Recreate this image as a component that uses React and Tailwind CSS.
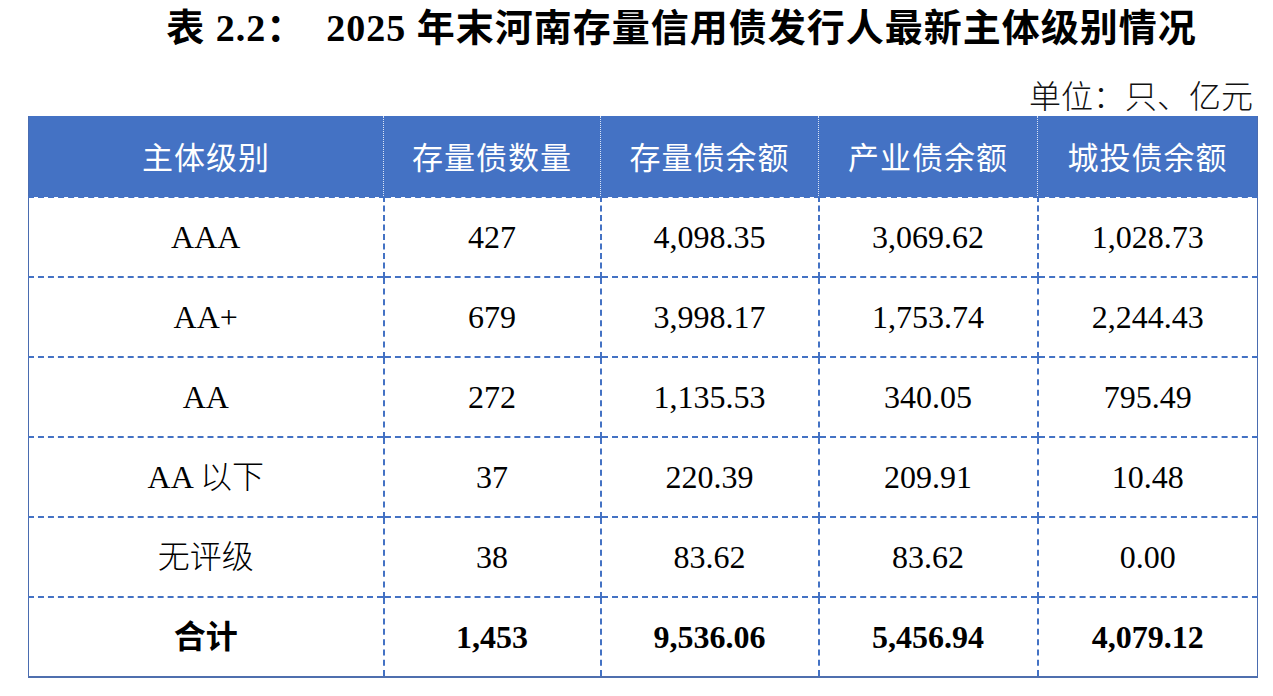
const font = "font-['Liberation_Serif','Noto_Sans_CJK_SC',serif]";

const rows = [
  ["AAA", "427", "4,098.35", "3,069.62", "1,028.73"],
  ["AA+", "679", "3,998.17", "1,753.74", "2,244.43"],
  ["AA", "272", "1,135.53", "340.05", "795.49"],
  ["AA 以下", "37", "220.39", "209.91", "10.48"],
  ["无评级", "38", "83.62", "83.62", "0.00"],
];

const total = ["合计", "1,453", "9,536.06", "5,456.94", "4,079.12"];

const headers = ["主体级别", "存量债数量", "存量债余额", "产业债余额", "城投债余额"];

const widths = ["w-[355px]", "w-[217px]", "w-[218px]", "w-[219px]", "w-[220px]"];

export default function App() {
  return (
    <div className={`w-[1273px] h-[696px] bg-white text-black ${font}`}>
      <h1 className="pt-[5px] pl-[90px] text-center text-[38px] leading-[46px] font-bold tracking-[1px] whitespace-pre">
        表 2.2：  2025 年末河南存量信用债发行人最新主体级别情况
      </h1>
      <div className="mt-[22px] mb-[1px] pr-[20px] text-right text-[32px] leading-[42px] font-['Noto_Sans_CJK_SC',sans-serif] font-light text-[#111]">
        单位：只、亿元
      </div>
      <table className="ml-[28px] w-[1229px] border-collapse table-fixed border-x border-b-2 border-solid border-x-[#4a6cb0] border-b-[#4f6fae]">
        <colgroup>
          {widths.map((w, i) => (
            <col key={i} className={w} />
          ))}
        </colgroup>
        <thead>
          <tr className="h-[81px] bg-[#4472c4]">
            {headers.map((h, i) => (
              <th
                key={h}
                className={`p-0 text-center align-middle text-white text-[31px] font-normal tracking-[1px] font-['Noto_Sans_CJK_SC',sans-serif] ${
                  i < 4 ? "border-r border-dotted border-r-[#dbe4f5]" : ""
                }`}
              >
                {h}
              </th>
            ))}
          </tr>
        </thead>
        <tbody>
          {rows.map((r, ri) => (
            <tr key={ri} className="h-[80px]">
              {r.map((c, ci) => (
                <td
                  key={ci}
                  className={`p-0 text-center align-middle text-[32px] font-light border-t-2 border-dashed border-t-[#4472c4] ${
                    ci < 4 ? "border-r-2 border-r-[#4472c4]" : ""
                  }`}
                >
                  {c}
                </td>
              ))}
            </tr>
          ))}
          <tr className="h-[80px]">
            {total.map((c, ci) => (
              <td
                key={ci}
                className={`p-0 text-center align-middle text-[32px] font-bold border-t-2 border-dashed border-t-[#4472c4] ${
                  ci < 4 ? "border-r-2 border-r-[#4472c4]" : ""
                }`}
              >
                {c}
              </td>
            ))}
          </tr>
        </tbody>
      </table>
    </div>
  );
}
